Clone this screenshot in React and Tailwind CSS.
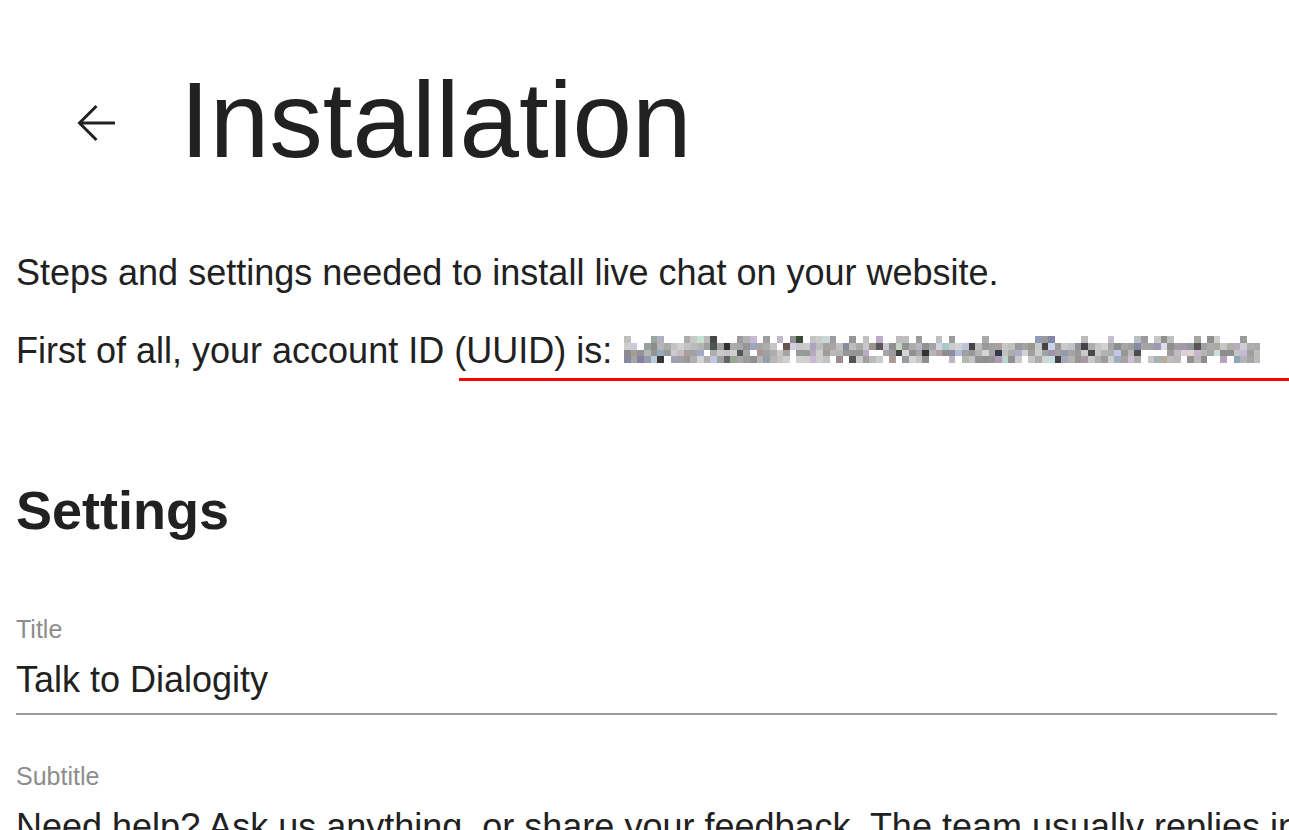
import React from 'react';

// pixelated (blurred) account id
function makeMosaic() {
  let seed = 917;
  const rand = () => {
    seed |= 0;
    seed = (seed + 0x6d2b79f5) | 0;
    let t = Math.imul(seed ^ (seed >>> 15), 1 | seed);
    t = (t + Math.imul(t ^ (t >>> 7), 61 | t)) ^ t;
    return ((t ^ (t >>> 14)) >>> 0) / 4294967296;
  };
  const fill = [0.4, 0.93, 0.93, 0.8];
  const cells = [];
  for (let r = 0; r < 4; r++) {
    for (let c = 0; c < 96; c++) {
      if (rand() > fill[r]) {
        cells.push('#ffffff');
        continue;
      }
      let l = 140 + Math.floor(rand() * 75);
      if (rand() < 0.06) l = 40 + Math.floor(rand() * 50);
      let rr = l, gg = l, bb = l;
      if (rand() < 0.4) {
        rr += Math.floor(rand() * 36 - 18);
        gg += Math.floor(rand() * 30 - 12);
        bb += Math.floor(rand() * 40 - 12);
      }
      const cl = (v) => Math.max(0, Math.min(255, v));
      cells.push(`rgb(${cl(rr)},${cl(gg)},${cl(bb)})`);
    }
  }
  return cells;
}

const mosaic = makeMosaic();

function Field({ label, value, className }) {
  return (
    <div className={className}>
      <div className="text-[25px] leading-[30px] text-[#8d8d8d]">{label}</div>
      <div className="mt-[14px] w-[1261px] pb-[11px] border-b-2 border-[#9a9a9a] text-[36px] leading-[44px] whitespace-nowrap">
        {value}
      </div>
    </div>
  );
}

export default function App() {
  return (
    <div className="relative w-[1289px] h-[830px] overflow-hidden bg-white text-[#212121] font-['Liberation_Sans',Arial,sans-serif]">
      <div className="pl-[16px]">
        <div className="flex items-center pt-[67px] pl-[60px]">
          <svg width="40" height="40" viewBox="0 0 40 40" fill="none" stroke="#212121" strokeWidth="3" className="mt-[6px]">
            <path d="M39 20H4" />
            <path d="M20.5 3L3.5 20L20.5 37" />
          </svg>
          <h1 className="ml-[64px] text-[107px] leading-[106px] font-normal">Installation</h1>
        </div>

        <p className="mt-[73px] text-[36px] leading-[54px]">
          Steps and settings needed to install live chat on your website.
        </p>
        <div className="mt-[24px] flex items-start">
          <span className="text-[36px] leading-[54px]">First of all, your account ID (UUID) is:</span>
          <div className="ml-[12px] mt-[12px] grid grid-cols-[repeat(96,6.64px)] grid-rows-[repeat(4,6.8px)]">
            {mosaic.map((c, i) => (
              <div key={i} style={{ backgroundColor: c }} />
            ))}
          </div>
        </div>

        <h2 className="mt-[101px] text-[54px] leading-[62px] font-bold">Settings</h2>

        <Field className="mt-[73px]" label="Title" value="Talk to Dialogity" />
        <Field
          className="mt-[46px]"
          label="Subtitle"
          value="Need help? Ask us anything, or share your feedback. The team usually replies in a few minutes."
        />
      </div>

      <div className="absolute left-[459px] top-[378px] w-[830px] h-[3px] bg-[#ff0000]" />
    </div>
  );
}
